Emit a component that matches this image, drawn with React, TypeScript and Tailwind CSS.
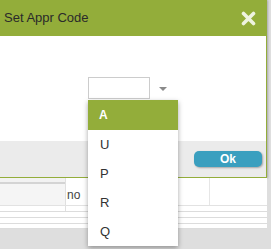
import React from 'react';

const options = ['A', 'U', 'P', 'R', 'Q'];

const App: React.FC = () => {
  return (
    <div
      className="relative w-[271px] h-[249px] overflow-hidden bg-[#dedede] text-[#333]"
      style={{ fontFamily: '"Liberation Sans", Arial, sans-serif' }}
    >
      {/* dialog */}
      <div className="w-[267px] border-r-[1px] border-b-[1px] border-[#93ad3a] shadow-[1px_0_2px_rgba(0,0,0,0.25)]">
        <div className="h-[36px] bg-[#93ad3a] flex items-center justify-between pl-[4px] pr-[10px]">
          <span className="text-[13px] text-[#2a2a2a]">Set Appr Code</span>
          <svg width="15" height="15" viewBox="0 0 15 15">
            <path d="M2.5 2.5 L12.5 12.5 M12.5 2.5 L2.5 12.5" stroke="#eef3e0" strokeWidth="3.6" strokeLinecap="round" />
          </svg>
        </div>
        <div className="h-[105px] bg-white pt-[41px] pl-[88px] flex items-start">
          <div className="w-[62px] h-[22px] border border-[#cccccc] bg-white" />
          <div className="ml-[9px] mt-[10px] w-0 h-0 border-l-[4px] border-r-[4px] border-t-[4px] border-l-transparent border-r-transparent border-t-[#8a8a8a]" />
        </div>
        <div className="h-[36px] bg-[#ebebeb] flex items-start justify-end pt-[10px] pr-[4px]">
          <button className="w-[68px] h-[16px] rounded-[5px] bg-[#3a9fbf] text-white text-[12px] font-bold leading-[16px] shadow-[1px_1px_2px_rgba(0,0,0,0.3)]">
            Ok
          </button>
        </div>
      </div>

      {/* page behind the dialog */}
      <div className="w-[267px] bg-white">
        <div className="flex h-[27px]">
          <div className="w-[65px] flex flex-col">
            <div className="h-[6px] bg-[#f2f2f2] border-b-2 border-[#d4d4d4]" />
            <div className="flex-1 bg-[#f5f5f5]" />
          </div>
          <div className="w-[1px] bg-[#e0e0e0]" />
          <div className="w-[143px] flex items-center pl-[1px] pt-[6px] text-[12px] text-[#444]">no</div>
          <div className="w-[1px] bg-[#e6e6e6]" />
          <div className="flex-1" />
        </div>
        <div className="flex h-[6px] border-t border-[#e2e2e2]">
          <div className="w-[65px]" />
          <div className="w-[1px] bg-[#e0e0e0]" />
        </div>
        <div className="h-[6px] border-t border-[#dcdcdc]" />
        <div className="h-[6px] border-t border-[#dcdcdc]" />
        <div className="h-[6px] border-t border-[#dcdcdc] border-b" />
      </div>

      {/* dropdown list */}
      <ul className="absolute left-[88px] top-[100px] w-[90px] bg-white shadow-[0_2px_5px_rgba(0,0,0,0.35)]">
        {options.map((o, i) => (
          <li
            key={o}
            className={
              i === 0
                ? 'h-[30px] pl-[11px] flex items-center bg-[#93ad3a] text-white font-bold text-[12px]'
                : 'h-[29px] pl-[12px] flex items-center text-[#333] text-[13px]'
            }
          >
            {o}
          </li>
        ))}
      </ul>
    </div>
  );
};

export default App;
